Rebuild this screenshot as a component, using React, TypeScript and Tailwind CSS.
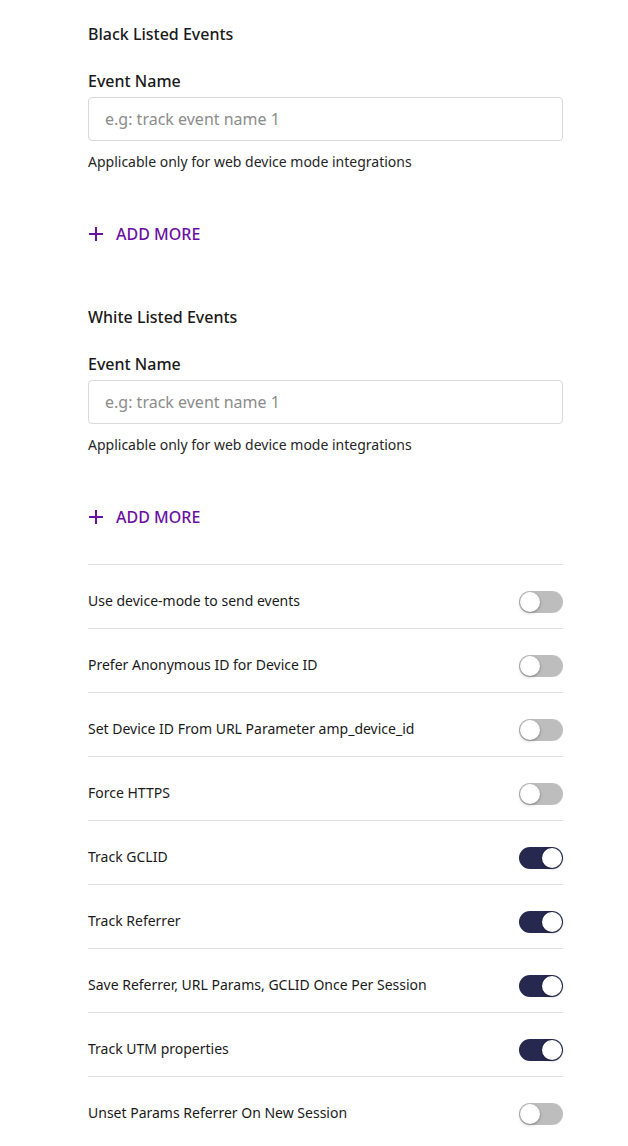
import React from "react";

const font = { fontFamily: '"Noto Sans", "Open Sans", sans-serif' };

function Toggle({ on }: { on: boolean }) {
  return (
    <div
      className={`relative w-[44px] h-[22px] rounded-full ${on ? "bg-[#26284f]" : "bg-[#bdbdbd]"}`}
    >
      <div
        className={`absolute top-[1px] w-[20px] h-[20px] rounded-full bg-white shadow-[0_1px_3px_rgba(0,0,0,0.35)] ${on ? "left-[23px]" : "left-[1px]"}`}
      />
    </div>
  );
}

function EventSection({ title, first }: { title: string; first?: boolean }) {
  return (
    <div className={first ? "pt-[22px]" : "pt-[59px]"}>
      <div className="text-[16px] leading-[24px] font-medium text-[#1a1a1a]">{title}</div>
      <div className="mt-[23px] text-[16px] leading-[24px] font-medium text-[#1a1a1a]">Event Name</div>
      <div className="mt-[4px] h-[44px] rounded-[4px] border border-[#d9d9d9] flex items-center px-[16px] text-[16px] text-[#8c8c8c]">
        e.g: track event name 1
      </div>
      <div className="mt-[11px] text-[14px] leading-[20px] text-[#262626]">
        Applicable only for web device mode integrations
      </div>
      <div className="mt-[50px] flex items-center h-[24px] text-[#6b0fa3]">
        <svg width="16" height="16" viewBox="0 0 16 16" className="mr-[12px]">
          <path d="M8 1v14M1 8h14" stroke="currentColor" strokeWidth="2" />
        </svg>
        <span className="text-[16px] leading-[24px] font-medium">ADD MORE</span>
      </div>
    </div>
  );
}

const rows: [string, boolean][] = [
  ["Use device-mode to send events", false],
  ["Prefer Anonymous ID for Device ID", false],
  ["Set Device ID From URL Parameter amp_device_id", false],
  ["Force HTTPS", false],
  ["Track GCLID", true],
  ["Track Referrer", true],
  ["Save Referrer, URL Params, GCLID Once Per Session", true],
  ["Track UTM properties", true],
  ["Unset Params Referrer On New Session", false],
];

export default function App() {
  return (
    <div className="w-[628px] h-[1146px] overflow-hidden bg-white" style={font}>
      <div className="ml-[88px] w-[475px]">
        <EventSection title="Black Listed Events" first />
        <EventSection title="White Listed Events" />
        <div className="mt-[35px]">
          {rows.map(([label, on]) => (
            <div key={label} className="h-[64px] border-t border-[#e0e0e0] pt-[10px] flex items-center justify-between">
              <span className="text-[14px] leading-[20px] pb-[2px] text-[#1a1a1a]">{label}</span>
              <Toggle on={on} />
            </div>
          ))}
        </div>
      </div>
    </div>
  );
}
